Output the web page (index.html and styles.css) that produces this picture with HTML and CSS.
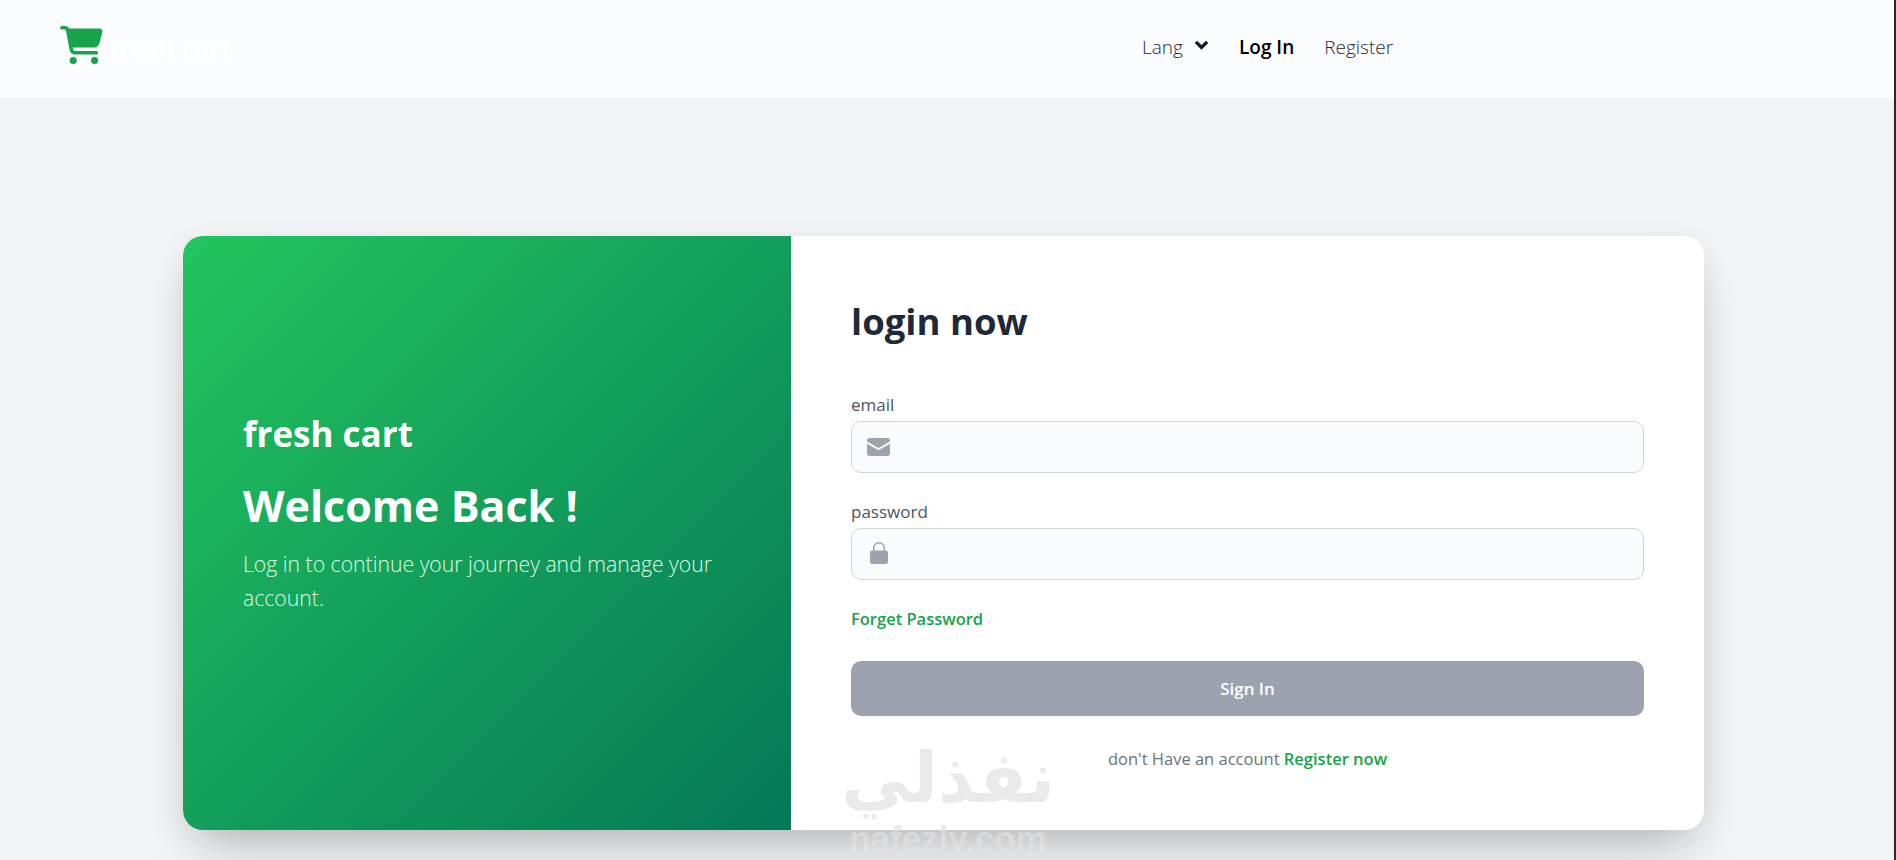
FILE: index.html
```html
<!DOCTYPE html>
<html lang="en">
<head>
    <meta charset="UTF-8">
    <meta name="viewport" content="width=device-width, initial-scale=1.0">
    <title>Fresh Cart - Login</title>
    <link rel="stylesheet" href="styles.css">
</head>
<body>
    <nav class="navbar">
        <a class="brand" href="#">
            <svg class="brand-icon" viewBox="0 0 576 512" aria-hidden="true">
                <path d="M0 24C0 10.700 10.700 0 24 0H69.500c22 0 41.500 12.800 50.600 32h411c26.300 0 45.500 25 38.600 50.400l-41 152.300c-8.500 31.400-37 53.300-69.500 53.300H170.700l5.400 28.500c2.200 11.300 12.100 19.500 23.600 19.500H488c13.300 0 24 10.700 24 24s-10.700 24-24 24H199.700c-34.600 0-64.300-24.600-70.700-58.500L77.400 54.500c-.7-3.800-4-6.500-7.900-6.500H24C10.700 48 0 37.300 0 24zM128 464a48 48 0 1 1 96 0 48 48 0 1 1 -96 0zm336-48a48 48 0 1 1 0 96 48 48 0 1 1 0-96z"/>
            </svg>
            <span class="brand-name">fresh cart</span>
        </a>
        <ul class="nav-links">
            <li class="lang">Lang
                <svg class="chevron" viewBox="0 0 12 8" aria-hidden="true"><path d="M1.500 1.500 6 6l4.500-4.500"/></svg>
            </li>
            <li class="active">Log In</li>
            <li>Register</li>
        </ul>
    </nav>

    <main class="page">
        <section class="card">
            <div class="welcome">
                <h2>fresh cart</h2>
                <h1>Welcome Back !</h1>
                <p>Log in to continue your journey and manage your account.</p>
            </div>
            <form class="login">
                <h3>login now</h3>
                <label for="email">email</label>
                <div class="field">
                    <svg class="field-icon icon-mail" viewBox="0 0 22 17" aria-hidden="true">
                        <path d="M2.500 0h17A2.500 2.500 0 0 1 22 2.500v.7l-11 6.300L0 3.200v-.7A2.500 2.500 0 0 1 2.500 0zM0 5.400l11 6.300 11-6.300v9.100a2.500 2.500 0 0 1-2.500 2.500h-17A2.500 2.500 0 0 1 0 14.500z"/>
                    </svg>
                    <input type="email" id="email">
                </div>
                <label for="password">password</label>
                <div class="field">
                    <svg class="field-icon icon-lock" viewBox="0 0 18 22" aria-hidden="true">
                        <path d="M9 0a6 6 0 0 1 6 6v2.500h.7A2.300 2.300 0 0 1 18 10.800v8.900a2.300 2.300 0 0 1-2.300 2.300H2.300A2.300 2.300 0 0 1 0 19.700v-8.900a2.300 2.300 0 0 1 2.300-2.300H3V6a6 6 0 0 1 6-6zm0 1.500A4.500 4.500 0 0 0 4.500 6v2.500h9V6A4.500 4.500 0 0 0 9 1.500z"/>
                    </svg>
                    <input type="password" id="password">
                </div>
                <a class="forget" href="#">Forget Password</a>
                <button type="button" class="submit">Sign In</button>
                <p class="switch">don't Have an account <a href="#">Register now</a></p>
            </form>
            <div class="watermark" aria-hidden="true">
                <span class="wm-ar">نفذلي</span>
                <span class="wm-en">nafezly.com</span>
            </div>
        </section>
    </main>
</body>
</html>
```

FILE: styles.css
```css
* {
    box-sizing: border-box;
}

html, body {
    height: 100%;
}

body {
    margin: 0;
    background-color: #f3f4f6;
    border-right: 2px solid #2a2a2a;
    font-family: "Open Sans", "Noto Sans", sans-serif;
    overflow: hidden;
}

/* navbar */
.navbar {
    height: 98px;
    background-color: #fbfcfe;
    display: flex;
    align-items: center;
    padding: 0 60px;
}

.brand {
    display: flex;
    align-items: center;
    gap: 7px;
    text-decoration: none;
    margin-bottom: 8px;
}

.brand-icon {
    width: 43px;
    height: 38px;
    fill: #16a34a;
}

.brand-name {
    color: #fff;
    font-size: 26px;
    font-weight: 600;
    margin-top: 6px;
}

.nav-links {
    list-style: none;
    display: flex;
    align-items: center;
    gap: 30px;
    margin: 0 0 4px 911px;
    padding: 0;
    font-size: 19px;
    font-weight: 300;
    color: #1f2937;
}

.nav-links .active {
    font-weight: 600;
    color: #000;
}

.lang {
    display: flex;
    align-items: center;
    gap: 11px;
}

.chevron {
    width: 15px;
    height: 10px;
    fill: none;
    stroke: #111827;
    stroke-width: 2.600;
    margin-bottom: 4px;
}

/* card */
.page {
    padding: 138px 190px 0 183px;
}

.card {
    position: relative;
    display: grid;
    grid-template-columns: 608px 1fr;
    grid-template-rows: 594px;
    background-color: #fff;
    border-radius: 20px;
    box-shadow: 0 25px 50px -12px rgba(0, 0, 0, 0.25), 0 0 30px rgba(0, 0, 0, 0.04);
}

.welcome {
    background: linear-gradient(135deg, #22c55e, #047857);
    border-radius: 20px 0 0 20px;
    padding: 0 60px 40px;
    color: #fff;
    display: flex;
    flex-direction: column;
    justify-content: center;
}

.welcome h2 {
    margin: 0 0 21px;
    font-size: 35px;
    line-height: 44px;
    font-weight: 700;
}

.welcome h1 {
    margin: 0 0 12px;
    font-size: 43px;
    line-height: 58px;
    font-weight: 700;
}

.welcome p {
    margin: 0;
    font-size: 21.200px;
    line-height: 34px;
    font-weight: 300;
    color: #dcfce7;
}

.login {
    padding: 60px 60px 0;
    display: flex;
    flex-direction: column;
}

.login h3 {
    margin: 0 0 47px;
    font-size: 36.500px;
    line-height: 50px;
    font-weight: 700;
    color: #1f2937;
}

.login label {
    font-size: 17px;
    line-height: 24px;
    font-weight: 500;
    color: #4b5563;
    margin-bottom: 4px;
}

.field {
    position: relative;
    margin-bottom: 27px;
}

.field-icon {
    position: absolute;
    fill: #9ca3af;
}

.icon-mail {
    left: 16px;
    top: 17px;
    width: 23px;
    height: 18px;
}

.icon-lock {
    left: 19px;
    top: 14px;
    width: 18px;
    height: 22px;
}

.field input {
    display: block;
    width: 100%;
    height: 52px;
    border: 1px solid #d1d5db;
    border-radius: 10px;
    background-color: #fafbfc;
    padding: 0 16px 0 50px;
    font-size: 16px;
}

.forget {
    font-size: 16.500px;
    line-height: 24px;
    font-weight: 600;
    color: #16a34a;
    text-decoration: none;
}

.submit {
    height: 55px;
    margin-top: 30px;
    border: none;
    border-radius: 10px;
    background-color: #9ca3af;
    color: #fff;
    font-family: inherit;
    font-size: 17px;
    font-weight: 600;
}

.switch {
    margin: 30px 0 0;
    text-align: center;
    font-size: 16.500px;
    line-height: 26px;
    color: #6b7280;
}

.switch a {
    color: #16a34a;
    font-weight: 600;
    text-decoration: none;
}

/* watermark sitting over the card */
.watermark {
    position: absolute;
    left: 650px;
    top: 508px;
    width: 230px;
    display: flex;
    flex-direction: column;
    align-items: center;
    gap: 9px;
    pointer-events: none;
    color: rgba(225, 225, 225, 0.7);
}

.wm-ar {
    font-family: "DejaVu Sans", sans-serif;
    font-size: 70px;
    line-height: 68px;
    font-weight: 700;
}

.wm-en {
    font-family: "Liberation Sans", sans-serif;
    font-size: 35px;
    line-height: 36px;
    font-weight: 700;
}
```
